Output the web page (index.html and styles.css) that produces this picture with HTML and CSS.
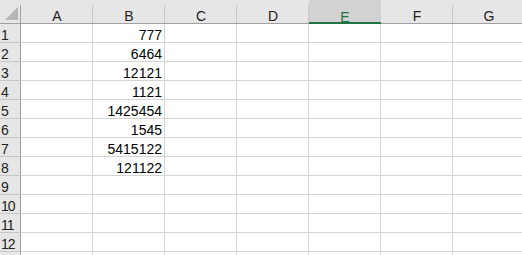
FILE: index.html
```html
<!DOCTYPE html>
<html lang="en">
<head>
    <meta charset="UTF-8">
    <title>Sheet1</title>
    <link rel="stylesheet" href="styles.css">
</head>
<body>
    <div class="sheet">
        <div class="row head">
            <div class="corner">
                <svg width="20" height="23" viewBox="0 0 20 23"><polygon points="18,7 18,20 5,20" fill="#b4b4b4"/></svg>
            </div>
            <div class="col">A</div>
            <div class="col">B</div>
            <div class="col">C</div>
            <div class="col">D</div>
            <div class="col selected">E</div>
            <div class="col">F</div>
            <div class="col">G</div>
        </div>
        <div class="row"><div class="num">1</div><div class="cell"></div><div class="cell">777</div><div class="cell"></div><div class="cell"></div><div class="cell"></div><div class="cell"></div><div class="cell"></div></div>
        <div class="row"><div class="num">2</div><div class="cell"></div><div class="cell">6464</div><div class="cell"></div><div class="cell"></div><div class="cell"></div><div class="cell"></div><div class="cell"></div></div>
        <div class="row"><div class="num">3</div><div class="cell"></div><div class="cell">12121</div><div class="cell"></div><div class="cell"></div><div class="cell"></div><div class="cell"></div><div class="cell"></div></div>
        <div class="row"><div class="num">4</div><div class="cell"></div><div class="cell">1121</div><div class="cell"></div><div class="cell"></div><div class="cell"></div><div class="cell"></div><div class="cell"></div></div>
        <div class="row"><div class="num">5</div><div class="cell"></div><div class="cell">1425454</div><div class="cell"></div><div class="cell"></div><div class="cell"></div><div class="cell"></div><div class="cell"></div></div>
        <div class="row"><div class="num">6</div><div class="cell"></div><div class="cell">1545</div><div class="cell"></div><div class="cell"></div><div class="cell"></div><div class="cell"></div><div class="cell"></div></div>
        <div class="row"><div class="num">7</div><div class="cell"></div><div class="cell">5415122</div><div class="cell"></div><div class="cell"></div><div class="cell"></div><div class="cell"></div><div class="cell"></div></div>
        <div class="row"><div class="num">8</div><div class="cell"></div><div class="cell">121122</div><div class="cell"></div><div class="cell"></div><div class="cell"></div><div class="cell"></div><div class="cell"></div></div>
        <div class="row"><div class="num">9</div><div class="cell"></div><div class="cell"></div><div class="cell"></div><div class="cell"></div><div class="cell"></div><div class="cell"></div><div class="cell"></div></div>
        <div class="row"><div class="num">10</div><div class="cell"></div><div class="cell"></div><div class="cell"></div><div class="cell"></div><div class="cell"></div><div class="cell"></div><div class="cell"></div></div>
        <div class="row"><div class="num">11</div><div class="cell"></div><div class="cell"></div><div class="cell"></div><div class="cell"></div><div class="cell"></div><div class="cell"></div><div class="cell"></div></div>
        <div class="row"><div class="num">12</div><div class="cell"></div><div class="cell"></div><div class="cell"></div><div class="cell"></div><div class="cell"></div><div class="cell"></div><div class="cell"></div></div>
        <div class="row"><div class="num"></div><div class="cell"></div><div class="cell"></div><div class="cell"></div><div class="cell"></div><div class="cell"></div><div class="cell"></div><div class="cell"></div></div>
    </div>
</body>
</html>
```

FILE: styles.css
```css
body {
    margin: 0;
    background: #fff;
    overflow: hidden;
    font-family: "Liberation Sans", Arial, sans-serif;
    font-size: 14px;
    color: #000;
}
.sheet {
    width: 525px;
}
.row {
    display: flex;
    height: 19px;
}
.row.head {
    height: 24px;
    background: #e6e6e6;
    border-bottom: 1px solid #a0a0a0;
    box-sizing: border-box;
}
.corner {
    width: 21px;
    flex: none;
    background: linear-gradient(#a0a0a0, #a0a0a0) right bottom / 1px 18px no-repeat;
}
.corner svg {
    display: block;
}
.col {
    width: 72px;
    flex: none;
    display: flex;
    align-items: flex-end;
    justify-content: center;
    line-height: 14px;
    color: #222;
    background: linear-gradient(#c6c6c6, #c6c6c6) right bottom / 1px 18px no-repeat;
}
.col.selected {
    background: #d2d2d2;
    color: #217346;
    box-shadow: inset 0 -2px 0 #217346;
    margin-bottom: -1px;
}
.num {
    width: 21px;
    flex: none;
    box-sizing: border-box;
    background: #e6e6e6;
    border-right: 1px solid #a0a0a0;
    border-bottom: 1px solid #c8c8c8;
    display: flex;
    align-items: flex-end;
    line-height: 14px;
    padding-left: 1px;
    color: #222;
    letter-spacing: -1px;
}
.cell {
    width: 72px;
    flex: none;
    box-sizing: border-box;
    border-right: 1px solid #d4d4d4;
    border-bottom: 1px solid #d4d4d4;
    display: flex;
    align-items: flex-end;
    justify-content: flex-end;
    line-height: 14px;
    padding-right: 2px;
}
```
